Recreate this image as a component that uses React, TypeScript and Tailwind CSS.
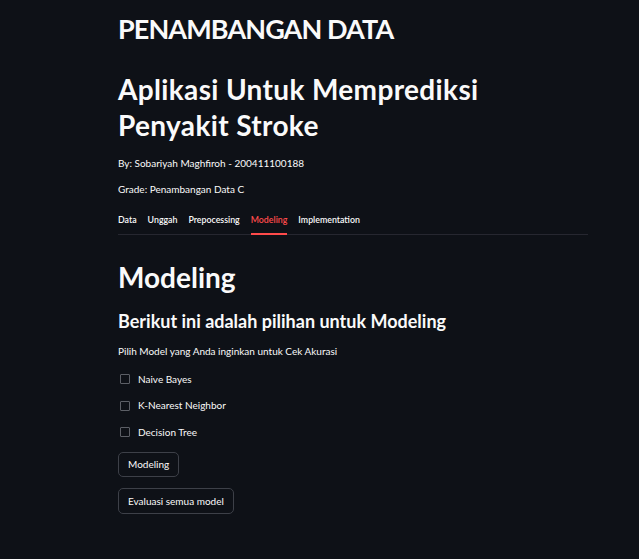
import { useState } from 'react'

const tabs = ['Data', 'Unggah', 'Prepocessing', 'Modeling', 'Implementation']
const models = ['Naive Bayes', 'K-Nearest Neighbor', 'Decision Tree']

export default function App() {
  const [active, setActive] = useState('Modeling')
  const [checked, setChecked] = useState<Record<string, boolean>>({})

  return (
    <div className="min-h-[559px] w-full bg-[#0e1117] text-[#fafafa] font-['Lato','Open_Sans',sans-serif]">
      <div className="ml-[118px] w-[470px] pt-[11px]">
        <h1 className="text-[27px] font-bold leading-[36px] tracking-[-0.9px]">PENAMBANGAN DATA</h1>

        <h1 className="mt-[24px] text-[28px] font-bold leading-[36px] tracking-[0.35px]">
          Aplikasi Untuk Memprediksi
          <br />
          Penyakit Stroke
        </h1>

        <p className="mt-[12px] text-[10px] leading-[16px]">By: Sobariyah Maghfiroh - 200411100188</p>
        <p className="mt-[10px] text-[10px] leading-[16px]">Grade: Penambangan Data C</p>

        {/* Tabs */}
        <div className="mt-[17px] flex gap-[11px] border-b border-[#262730]">
          {tabs.map(tab => (
            <button
              key={tab}
              onClick={() => setActive(tab)}
              className={`relative pb-[8px] text-[8.8px] font-semibold leading-[12px] ${
                active === tab ? 'text-[#ff4b4b]' : 'text-[#fafafa]'
              }`}
            >
              {tab}
              {active === tab && (
                <span className="absolute left-0 right-0 -bottom-px h-[2px] bg-[#ff4b4b]" />
              )}
            </button>
          ))}
        </div>

        <h2 className="mt-[24px] text-[28px] font-bold leading-[36px]">Modeling</h2>
        <h3 className="mt-[14px] text-[18px] font-bold leading-[24px]">Berikut ini adalah pilihan untuk Modeling</h3>
        <p className="mt-[10px] text-[10px] leading-[16px]">Pilih Model yang Anda inginkan untuk Cek Akurasi</p>

        <div className="mt-[12px] flex flex-col gap-[10.5px]">
          {models.map(m => (
            <label key={m} className="flex h-[16px] cursor-pointer items-center gap-[8px] text-[10px]">
              <span
                onClick={() => setChecked(c => ({ ...c, [m]: !c[m] }))}
                className={`ml-[2px] h-[10px] w-[10px] rounded-[1px] border ${
                  checked[m] ? 'border-[#ff4b4b] bg-[#ff4b4b]' : 'border-[#5c5f66]'
                }`}
              />
              {m}
            </label>
          ))}
        </div>

        <div className="mt-[12px] flex flex-col items-start gap-[11px]">
          <button className="h-[25px] rounded-[5px] border border-[#3d4048] px-[9px] text-[10px]">Modeling</button>
          <button className="h-[26px] rounded-[5px] border border-[#3d4048] px-[9px] text-[10px]">Evaluasi semua model</button>
        </div>
      </div>
    </div>
  )
}
